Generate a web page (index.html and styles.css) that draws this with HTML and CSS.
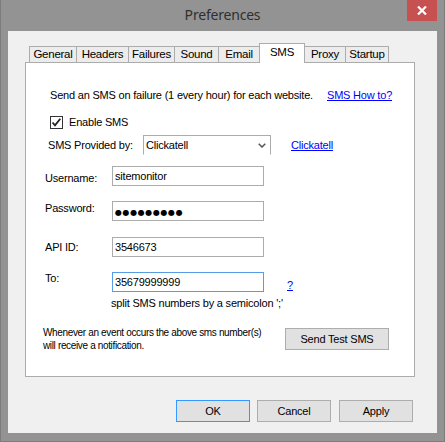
FILE: index.html
```html
<!DOCTYPE html>
<html>
<head>
<meta charset="utf-8">
<link rel="stylesheet" href="styles.css">
</head>
<body>
<div class="window">
  <div class="titlebar">
    <span></span>
    <span class="title">Preferences</span>
    <div class="close-wrap">
      <div class="close">
        <svg width="10" height="9" viewBox="0 0 10 9"><path d="M1 0.5 L9 8.5 M9 0.5 L1 8.5" stroke="#fff" stroke-width="2.2" fill="none"/></svg>
      </div>
    </div>
  </div>
  <div class="client">
    <div class="tabstrip">
      <div class="tab t-general">General</div>
      <div class="tab t-headers">Headers</div>
      <div class="tab t-failures">Failures</div>
      <div class="tab t-sound">Sound</div>
      <div class="tab t-email">Email</div>
      <div class="tab tab-active t-sms">SMS</div>
      <div class="tab t-proxy">Proxy</div>
      <div class="tab t-startup">Startup</div>
    </div>
    <div class="panel">
      <div class="intro">
        <span class="intro-text">Send an SMS on failure (1 every hour) for each website.</span>
        <a class="link">SMS How to?</a>
      </div>
      <div class="check-row">
        <span class="checkbox">
          <svg width="11" height="11" viewBox="0 0 11 11"><path d="M1.5 5.5 L4 8.3 L9.3 1.8" stroke="#222" stroke-width="1.8" fill="none"/></svg>
        </span>
        <span class="check-label">Enable SMS</span>
      </div>
      <div class="provider-row">
        <span class="provider-label">SMS Provided by:</span>
        <div class="combo">
          <span>Clickatell</span>
          <svg class="chev" width="8" height="5" viewBox="0 0 8 5"><path d="M0.7 0.7 L4 4 L7.3 0.7" stroke="#555" stroke-width="1.5" fill="none"/></svg>
        </div>
        <a class="link provider-link">Clickatell</a>
      </div>
      <div class="field-row row-user">
        <span class="field-label lbl-user">Username:</span>
        <div class="textbox">sitemonitor</div>
      </div>
      <div class="field-row row-pass">
        <span class="field-label lbl-pass">Password:</span>
        <div class="textbox"><span class="dots">●●●●●●●●●</span></div>
      </div>
      <div class="field-row row-api">
        <span class="field-label lbl-api">API ID:</span>
        <div class="textbox">3546673</div>
      </div>
      <div class="field-row row-to">
        <span class="field-label lbl-to">To:</span>
        <div class="textbox textbox-focus">35679999999</div>
        <a class="link help-link">?</a>
      </div>
      <div class="hint">split SMS numbers by a semicolon ';'</div>
      <div class="bottom-row">
        <div class="note">Whenever an event occurs the above sms number(s)<br>will receive a notification.</div>
        <div class="btn btn-test">Send Test SMS</div>
      </div>
    </div>
    <div class="buttons">
      <div class="btn btn-dlg btn-default">OK</div>
      <div class="btn btn-dlg btn-cancel">Cancel</div>
      <div class="btn btn-dlg">Apply</div>
    </div>
  </div>
</div>
</body>
</html>
```

FILE: styles.css
```css
* { box-sizing: border-box; }
html, body { margin: 0; padding: 0; }
body {
  width: 445px;
  height: 442px;
  overflow: hidden;
  font-family: "Liberation Sans", Arial, sans-serif;
  font-size: 11px;
  letter-spacing: -0.2px;
  color: #000;
}
.window {
  width: 445px;
  height: 442px;
  background: #939393;
  border: 1px solid #7c7c7c;
  border-top: none;
  display: flex;
  flex-direction: column;
}
.titlebar {
  height: 31px;
  display: grid;
  grid-template-columns: 1fr auto 1fr;
  align-items: start;
}
.title {
  font-family: "Noto Sans", "Open Sans", sans-serif;
  font-size: 14px;
  letter-spacing: -0.2px;
  color: #2f2f2f;
  line-height: 31px;
  margin-top: -1px;
}
.close-wrap {
  display: flex;
  justify-content: flex-end;
  padding-right: 7px;
}
.close {
  width: 30px;
  height: 21px;
  background: #c75050;
  display: flex;
  align-items: center;
  justify-content: center;
}
.client {
  margin: 0 7px 8px 7px;
  flex: 1;
  background: #f0f0f0;
  padding: 12px 0 0 17px;
}
.tabstrip {
  display: flex;
  align-items: flex-end;
  height: 19px;
  padding-left: 4px;
}
.tab {
  height: 16px;
  border: 1px solid #acacac;
  border-bottom: none;
  background: #ececec;
  text-align: center;
  line-height: 15px;
  margin-left: -1px;
  font-size: 11.5px;
  letter-spacing: -0.25px;
}
.tab:first-child { margin-left: 0; }
.tab-active {
  height: 20px;
  margin-bottom: -1px;
  background: #fff;
  position: relative;
  z-index: 1;
  line-height: 17px;
}
.t-general { width: 48px; }
.t-headers { width: 53px; }
.t-failures { width: 47px; }
.t-sound { width: 45px; }
.t-email { width: 42px; }
.t-sms { width: 46px; }
.t-proxy { width: 42px; }
.t-startup { width: 44px; }

.panel {
  width: 390px;
  height: 315px;
  background: #fff;
  border: 1px solid #acacac;
  padding-top: 26px;
}
.link {
  color: #0000ff;
  text-decoration: underline;
  cursor: pointer;
}
.intro {
  display: flex;
  height: 13px;
  line-height: 13px;
  padding-left: 24px;
}
.intro-text { width: 277px; }
.check-row {
  display: flex;
  align-items: center;
  height: 13px;
  margin-top: 14px;
  padding-left: 24px;
  line-height: 13px;
}
.checkbox {
  width: 13px;
  height: 13px;
  border: 1px solid #333;
  background: #fff;
  display: flex;
  align-items: center;
  justify-content: center;
}
.check-label { margin-left: 6px; }
.provider-row {
  display: flex;
  height: 20px;
  margin-top: 6px;
  padding-left: 22px;
  line-height: 20px;
}
.provider-label { width: 95px; }
.combo {
  width: 128px;
  height: 20px;
  border: 1px solid #acacac;
  border-bottom-color: #fff;
  padding-left: 2px;
  display: flex;
  justify-content: space-between;
  align-items: center;
  line-height: 18px;
}
.chev { margin-right: 4px; margin-top: 1px; }
.provider-link { margin-left: 20px; }

.field-row {
  display: flex;
  height: 20px;
  padding-left: 19px;
  align-items: flex-start;
}
.row-user { margin-top: 11px; }
.row-pass { margin-top: 15px; }
.row-api { margin-top: 16px; }
.row-to { margin-top: 15px; }
.field-label {
  width: 67px;
  line-height: 13px;
}
.lbl-user { margin-top: 6px; }
.lbl-pass { margin-top: 1px; }
.lbl-api { margin-top: 4px; }
.lbl-to { margin-top: 0; }
.textbox {
  width: 152px;
  height: 20px;
  border: 1px solid #acacac;
  padding-left: 2px;
  line-height: 18px;
}
.textbox-focus { border-color: #569de5; }
.dots {
  font-family: "DejaVu Sans", sans-serif;
  font-size: 8px;
  letter-spacing: 0.6px;
  line-height: 18px;
}
.help-link {
  margin-left: 23px;
  margin-top: 7px;
  line-height: 13px;
}
.hint {
  margin-top: 5px;
  padding-left: 85px;
  line-height: 13px;
  height: 13px;
}
.bottom-row {
  display: flex;
  margin-top: 16px;
  padding-left: 17px;
}
.note {
  width: 242px;
  font-size: 10px;
  letter-spacing: -0.35px;
  line-height: 13px;
}
.btn {
  height: 22px;
  border: 1px solid #adadad;
  background: #e1e1e1;
  display: flex;
  align-items: center;
  justify-content: center;
  font-size: 11px;
  letter-spacing: -0.2px;
}
.btn-test {
  width: 104px;
  margin-top: 2px;
}
.buttons {
  display: flex;
  justify-content: flex-end;
  margin-top: 23px;
  padding-right: 24px;
}
.btn-dlg { width: 74px; }
.btn-default { border-color: #3399ff; margin-right: 7px; }
.btn-cancel { margin-right: 8px; }
```
